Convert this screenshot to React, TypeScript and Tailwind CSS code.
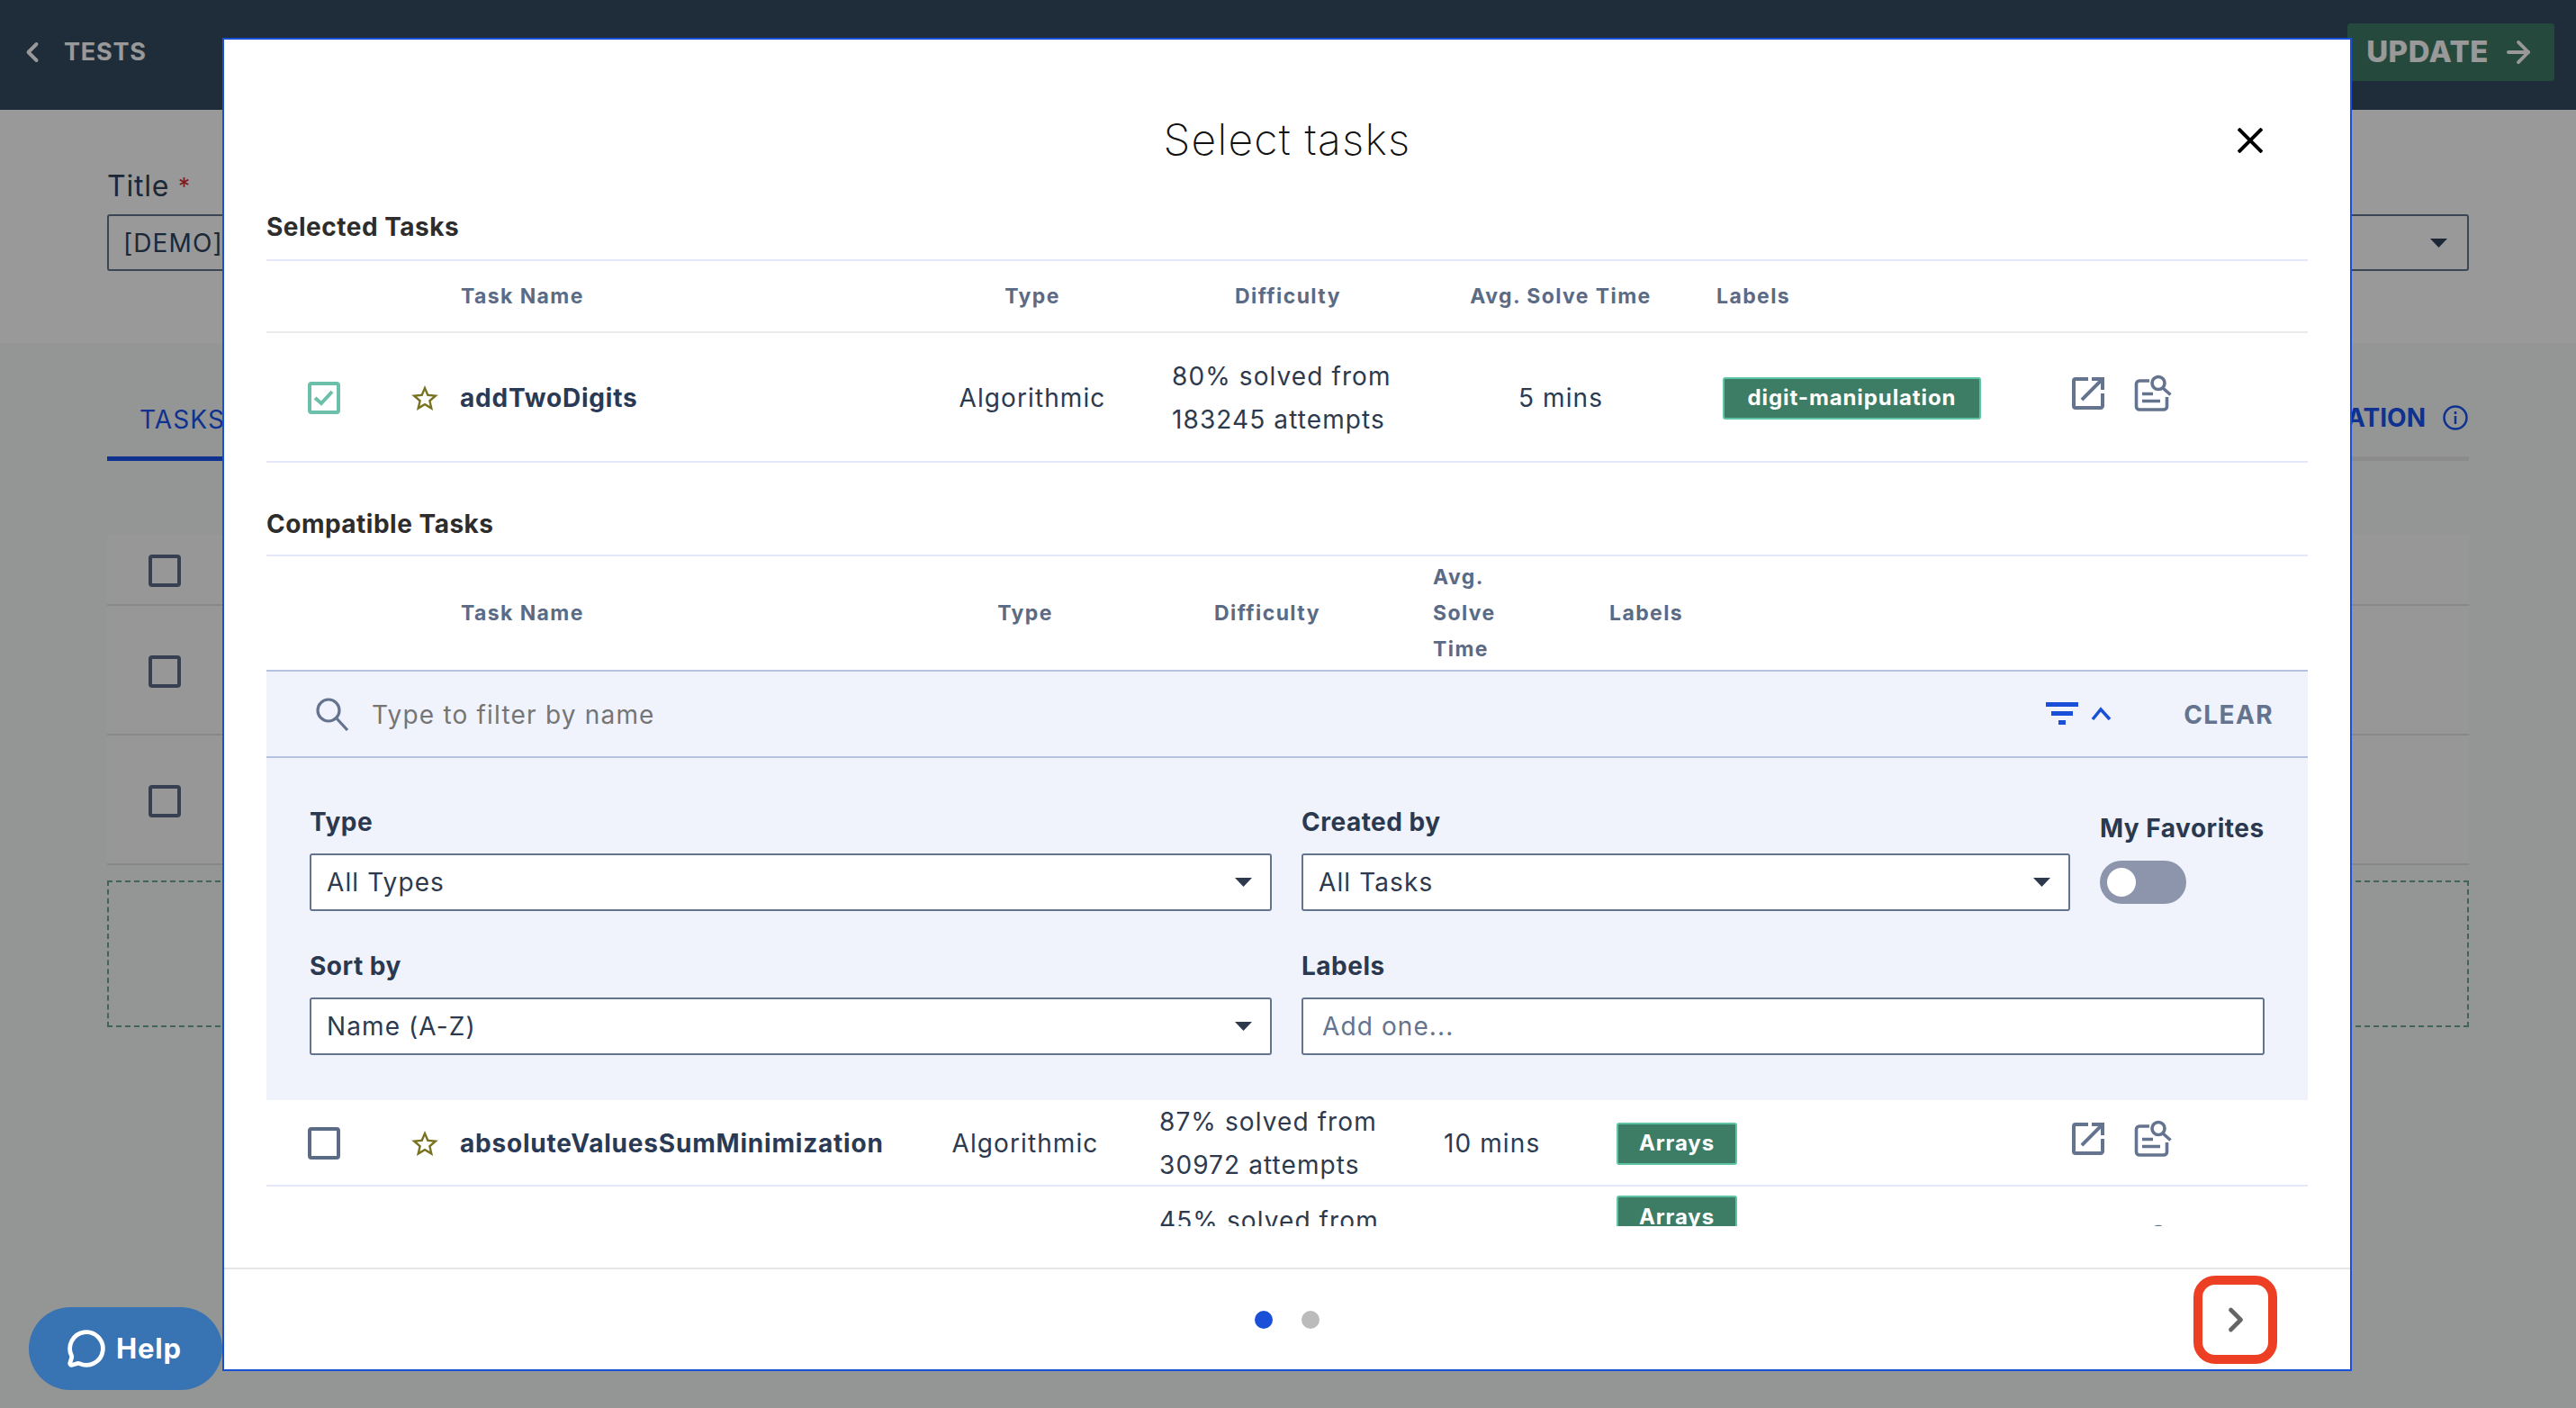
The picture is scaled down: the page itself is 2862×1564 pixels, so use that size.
import React from 'react';
import { ArrowRight, ChevronLeft, ChevronRight, MessageCircle } from 'lucide-react';

const Arrow = ({ className = 'fill-[#2d3a4e]' }: { className?: string }) => (
  <svg width="19" height="10" viewBox="0 0 19 10" className={className}>
    <path d="M0 0h19L9.5 10z" />
  </svg>
);

const Star = () => (
  <svg width="30" height="28" viewBox="2 2 20 19" className="fill-[#76721f] shrink-0">
    <path d="M22 9.24l-7.19-.62L12 2 9.19 8.63 2 9.24l5.46 4.73L5.82 21 12 17.27 18.18 21l-1.63-7.03L22 9.24zM12 15.4l-3.76 2.27 1-4.28-3.32-2.88 4.38-.38L12 6.1l1.71 4.04 4.38.38-3.32 2.88 1 4.28L12 15.4z" />
  </svg>
);

const ExternalIcon = () => (
  <svg width="36" height="36" viewBox="3 3 18 18" className="fill-[#64748f] shrink-0">
    <path d="M19 19H5V5h7V3H5a2 2 0 00-2 2v14a2 2 0 002 2h14c1.1 0 2-.9 2-2v-7h-2v7zM14 3v2h3.59l-9.83 9.83 1.41 1.41L19 6.41V10h2V3h-7z" />
  </svg>
);

const PreviewIcon = () => (
  <svg width="42" height="42" viewBox="0 0 42 42" fill="none" className="stroke-[#64748f] shrink-0" strokeWidth="3.6">
    <path d="M17 7H6a3.5 3.5 0 0 0-3.5 3.5v25A3.5 3.5 0 0 0 6 39h27a3.5 3.5 0 0 0 3.5-3.5V25" />
    <circle cx="27" cy="9.5" r="7" />
    <path d="M32 15l8.5 7.5M9 21.5h12M9 29.5h20" />
  </svg>
);

const Checkbox = ({ checked = false }: { checked?: boolean }) =>
  checked ? (
    <div className="w-[36px] h-[36px] rounded-[4px] border-[4px] border-[#6cbfa8] flex items-center justify-center shrink-0">
      <svg width="26" height="22" viewBox="0 0 26 22" fill="none" className="stroke-[#6cbfa8]" strokeWidth="4">
        <path d="M3 11l7 6L22 4" />
      </svg>
    </div>
  ) : (
    <div className="w-[36px] h-[36px] rounded-[4px] border-[4px] border-[#5c6b85] shrink-0" />
  );

const Badge = ({ label, width }: { label: string; width: string }) => (
  <span className={`${width} h-[47px] rounded-[3px] border-2 border-[#5fc3a5] bg-[#3d7d66] text-white font-bold text-[24px] tracking-[0.9px] flex items-center justify-center`}>
    {label}
  </span>
);

const FilterSelect = ({ value }: { value: string }) => (
  <div className="h-[64px] bg-white border-2 border-[#64748f] rounded-[3px] flex items-center justify-between pl-[17px] pr-[20px] text-[28px] tracking-[1.1px] text-[#2d3a4e]">
    <span>{value}</span>
    <Arrow />
  </div>
);

const Label = ({ children }: { children: React.ReactNode }) => (
  <div className="h-[36px] leading-[36px] text-[28px] font-bold tracking-[0.5px] text-[#2b3950] mb-[17px]">{children}</div>
);

const headCell = 'text-[23px] font-bold tracking-[1.4px] text-[#5b6b85]';

export default function App() {
  return (
    <div className="relative w-[2862px] h-[1564px] overflow-hidden bg-[#f7faf8] font-['Inter',sans-serif]">
      {/* Page behind the dialog */}
      <header className="h-[122px] bg-[#344b61] flex items-center justify-between pl-[18px] pr-[24px]">
        <div className="flex items-center gap-[17px] text-white font-bold text-[27px] tracking-[0.8px] mb-[6px]">
          <ChevronLeft size={36} strokeWidth={2.6} />
          <span>TESTS</span>
        </div>
        <div className="w-[230px] h-[64px] mb-[6px] rounded-[4px] bg-[#3e7c66] text-white font-extrabold text-[33px] tracking-[0.5px] flex items-center justify-center gap-[14px]">
          <span>UPDATE</span>
          <ArrowRight size={38} strokeWidth={2.4} />
        </div>
      </header>
      <div className="h-[259px] bg-white px-[119px] pt-[63px]">
        <div className="h-[44px] text-[32px] leading-[44px] tracking-[0.8px] text-[#2f435c]">
          Title <span className="text-[#d22f2f] text-[26px] align-top">*</span>
        </div>
        <div className="mt-[9px] h-[63px] border-2 border-[#64748a] rounded-[3px] flex items-center justify-between pl-[16px] pr-[22px] text-[28px] tracking-[1.1px] text-[#2f435c]">
          <span>[DEMO] Test</span>
          <Arrow className="fill-[#2f435c]" />
        </div>
      </div>
      <div className="px-[119px]">
        <div className="h-[131px] flex items-end justify-between border-b-[5px] border-[#e8e8e8]">
          <div className="w-[220px] h-[131px] -mb-[5px] pl-[36px] pt-[64px] border-b-[5px] border-[#1a52f0] text-[28px] tracking-[1.1px] text-[#1a52f0]">TASKS</div>
          <div className="flex items-center gap-[18px] pb-[22px] font-bold text-[28px] text-[#1a52f0]">
            <span>CONFIGURATION</span>
            <svg width="30" height="30" viewBox="0 0 30 30" fill="none" className="stroke-[#1a52f0]" strokeWidth="2.5">
              <circle cx="15" cy="15" r="12.5" />
              <path d="M15 13v9M15 8v3" />
            </svg>
          </div>
        </div>
        <div className="mt-[82px] bg-[#fcfcfc]">
          <div className="h-[79px] pl-[46px] pt-[2px] flex items-center border-b-2 border-[#e0e0e8]"><Checkbox /></div>
          <div className="h-[144px] pl-[46px] pt-[3px] flex items-center border-b-2 border-[#e0e0e8]"><Checkbox /></div>
          <div className="h-[144px] pl-[46px] pt-[3px] flex items-center border-b-2 border-[#e0e0e8]"><Checkbox /></div>
        </div>
        <div className="mt-[17px] h-[163px] border-2 border-dashed border-[#6ba893]" />
      </div>

      {/* Dim layer */}
      <div className="absolute inset-0 bg-black/40" />

      {/* Help launcher */}
      <div className="absolute left-[32px] top-[1452px] w-[215px] h-[92px] rounded-full bg-[#3873b4] text-white font-bold text-[31px] tracking-[0.8px] flex items-center pl-[42px] gap-[11px]">
        <MessageCircle size={44} strokeWidth={2.6} className="shrink-0" />
        <span>Help</span>
      </div>

      {/* Dialog */}
      <div className="absolute left-[247px] top-[42px] w-[2366px] h-[1481px] bg-white border-2 border-[#1a4fd8] flex flex-col">
        <div className="relative flex-1 min-h-0 px-[47px]">
          <div className="h-[188px] flex justify-center pt-[84px]">
            <h1 className="text-[48px] leading-[54px] font-extralight tracking-[1.2px] text-[#111]">Select tasks</h1>
          </div>
          <svg width="28" height="28" viewBox="0 0 28 28" className="absolute right-[97px] top-[98px] stroke-black" strokeWidth="4">
            <path d="M1 1l26 26M27 1L1 27" />
          </svg>

          {/* Selected */}
          <div className="h-[58px] border-b-2 border-[#e3e7f8] text-[28px] font-bold tracking-[0.5px] leading-[40px] text-[#2d2d2d]">Selected Tasks</div>
          <div className="h-[80px] grid grid-cols-[744px_214px_354px_252px_442px_1fr] items-center border-b-2 border-[#ebebeb]">
            <div className={`${headCell} pl-[216px]`}>Task Name</div>
            <div className={`${headCell} text-center`}>Type</div>
            <div className={`${headCell} text-center`}>Difficulty</div>
            <div className={`${headCell} text-center`}>Avg. Solve Time</div>
            <div className={`${headCell} pl-[47px]`}>Labels</div>
          </div>
          <div className="h-[144px] pt-[2px] grid grid-cols-[744px_214px_354px_252px_442px_1fr] items-center border-b-2 border-[#e3e7f8] text-[28px] tracking-[1.1px] text-[#2d3a4e]">
            <div className="pl-[46px] flex items-center">
              <Checkbox checked />
              <div className="ml-[79px] mr-[24px]"><Star /></div>
              <span className="font-bold tracking-[0.8px] text-[#2a3a54]">addTwoDigits</span>
            </div>
            <div className="text-center">Algorithmic</div>
            <div className="pl-[48px] leading-[48px]">
              <div>80% solved from</div>
              <div>183245 attempts</div>
            </div>
            <div className="text-center">5 mins</div>
            <div className="pl-[54px]"><Badge label="digit-manipulation" width="w-[287px]" /></div>
            <div className="flex items-center gap-[33px] self-start pt-[44px]">
              <ExternalIcon />
              <PreviewIcon />
            </div>
          </div>

          {/* Compatible */}
          <div className="h-[104px] pt-[48px] border-b-2 border-[#e3e7f8] text-[28px] font-bold tracking-[0.5px] leading-[40px] text-[#2d2d2d]">Compatible Tasks</div>
          <div className="h-[126px] grid grid-cols-[734px_218px_320px_172px_562px_1fr] items-center">
            <div className={`${headCell} pl-[216px]`}>Task Name</div>
            <div className={`${headCell} text-center`}>Type</div>
            <div className={`${headCell} text-center`}>Difficulty</div>
            <div className={`${headCell} pl-[24px] leading-[40px]`}>Avg.<br />Solve<br />Time</div>
            <div className={`${headCell} pl-[48px]`}>Labels</div>
          </div>

          {/* Filter bar */}
          <div className="h-[98px] bg-[#f0f3fb] border-y-2 border-[#b6c3e0] flex items-center pl-[54px] pr-[38px]">
            <svg width="38" height="38" viewBox="0 0 38 38" fill="none" className="stroke-[#64748f] shrink-0" strokeWidth="3.2">
              <circle cx="15" cy="15" r="12" />
              <path d="M24 24l12 13" />
            </svg>
            <span className="ml-[25px] pt-[2px] text-[28px] tracking-[1.2px] text-[#757575]">Type to filter by name</span>
            <svg width="74" height="26" viewBox="0 0 74 26" fill="none" className="ml-auto shrink-0">
              <path d="M0 0h36v5H0zM6 10h24v5H6zM14 20h8v5h-8z" className="fill-[#1a4fd8]" />
              <path d="M52 19l9-11 10 11" className="stroke-[#1a4fd8]" strokeWidth="3.5" />
            </svg>
            <span className="ml-[79px] pt-[2px] text-[28px] font-bold tracking-[1.4px] text-[#64748f]">CLEAR</span>
          </div>

          {/* Filter fields */}
          <div className="h-[380px] bg-[#f0f3fb] pl-[48px] pr-[49px] pt-[53px] grid grid-cols-[1069px_854px_1fr] gap-x-[33px] gap-y-[43px] content-start">
            <div>
              <Label>Type</Label>
              <FilterSelect value="All Types" />
            </div>
            <div>
              <Label>Created by</Label>
              <FilterSelect value="All Tasks" />
            </div>
            <div className="pt-[7px]">
              <div className="h-[36px] leading-[36px] text-[28px] font-bold tracking-[0.5px] text-[#2b3950] whitespace-nowrap mb-[18px]">My Favorites</div>
              <div className="w-[96px] h-[48px] rounded-full bg-[#8d95ad] flex items-center pl-[8px]">
                <div className="w-[32px] h-[32px] rounded-full bg-white" />
              </div>
            </div>
            <div>
              <Label>Sort by</Label>
              <FilterSelect value="Name (A-Z)" />
            </div>
            <div className="col-span-2">
              <Label>Labels</Label>
              <div className="h-[64px] bg-white border-2 border-[#64748f] rounded-[3px] flex items-center pl-[21px] text-[28px] tracking-[1.1px] text-[#64748f]">Add one...</div>
            </div>
          </div>

          {/* Task list, cut off by the dialog footer */}
          <div className="h-[140px] overflow-hidden text-[28px] tracking-[1.1px] text-[#2d3a4e]">
            <div className="h-[96px] grid grid-cols-[734px_218px_320px_172px_562px_1fr] items-center border-b-2 border-[#e3e7f8]">
              <div className="pl-[46px] flex items-center">
                <Checkbox />
                <div className="ml-[79px] mr-[24px]"><Star /></div>
                <span className="font-bold tracking-[0.8px] text-[#2a3a54]">absoluteValuesSumMinimization</span>
              </div>
              <div className="text-center">Algorithmic</div>
              <div className="pl-[40px] leading-[48px]">
                <div>87% solved from</div>
                <div>30972 attempts</div>
              </div>
              <div className="pl-[36px]">10 mins</div>
              <div className="pl-[56px]"><Badge label="Arrays" width="w-[134px]" /></div>
              <div className="flex items-center gap-[33px] self-start pt-[22px]">
                <ExternalIcon />
                <PreviewIcon />
              </div>
            </div>
            <div className="grid grid-cols-[734px_218px_320px_172px_562px_1fr] items-start">
              <div />
              <div />
              <div className="pl-[40px] pt-[14px] leading-[48px]">45% solved from</div>
              <div />
              <div className="pl-[56px] pt-[10px]"><Badge label="Arrays" width="w-[134px]" /></div>
              <div className="flex items-center gap-[33px] pt-[42px]">
                <ExternalIcon />
                <PreviewIcon />
              </div>
            </div>
          </div>
        </div>

        {/* Footer */}
        <div className="h-[113px] border-t-2 border-[#e5e5e5] grid grid-cols-[1fr_auto_1fr] items-center">
          <div />
          <div className="flex items-center gap-[32px]">
            <div className="w-[20px] h-[20px] rounded-full bg-[#1a4fd8]" />
            <div className="w-[20px] h-[20px] rounded-full bg-[#bbbbbb]" />
          </div>
          <div className="flex justify-end pr-[81px]">
            <div className="w-[93px] h-[98px] rounded-[24px] border-[10px] border-[#ed3f24] flex items-center justify-center text-[#666]">
              <ChevronRight size={44} strokeWidth={2.6} />
            </div>
          </div>
        </div>
      </div>
    </div>
  );
}
